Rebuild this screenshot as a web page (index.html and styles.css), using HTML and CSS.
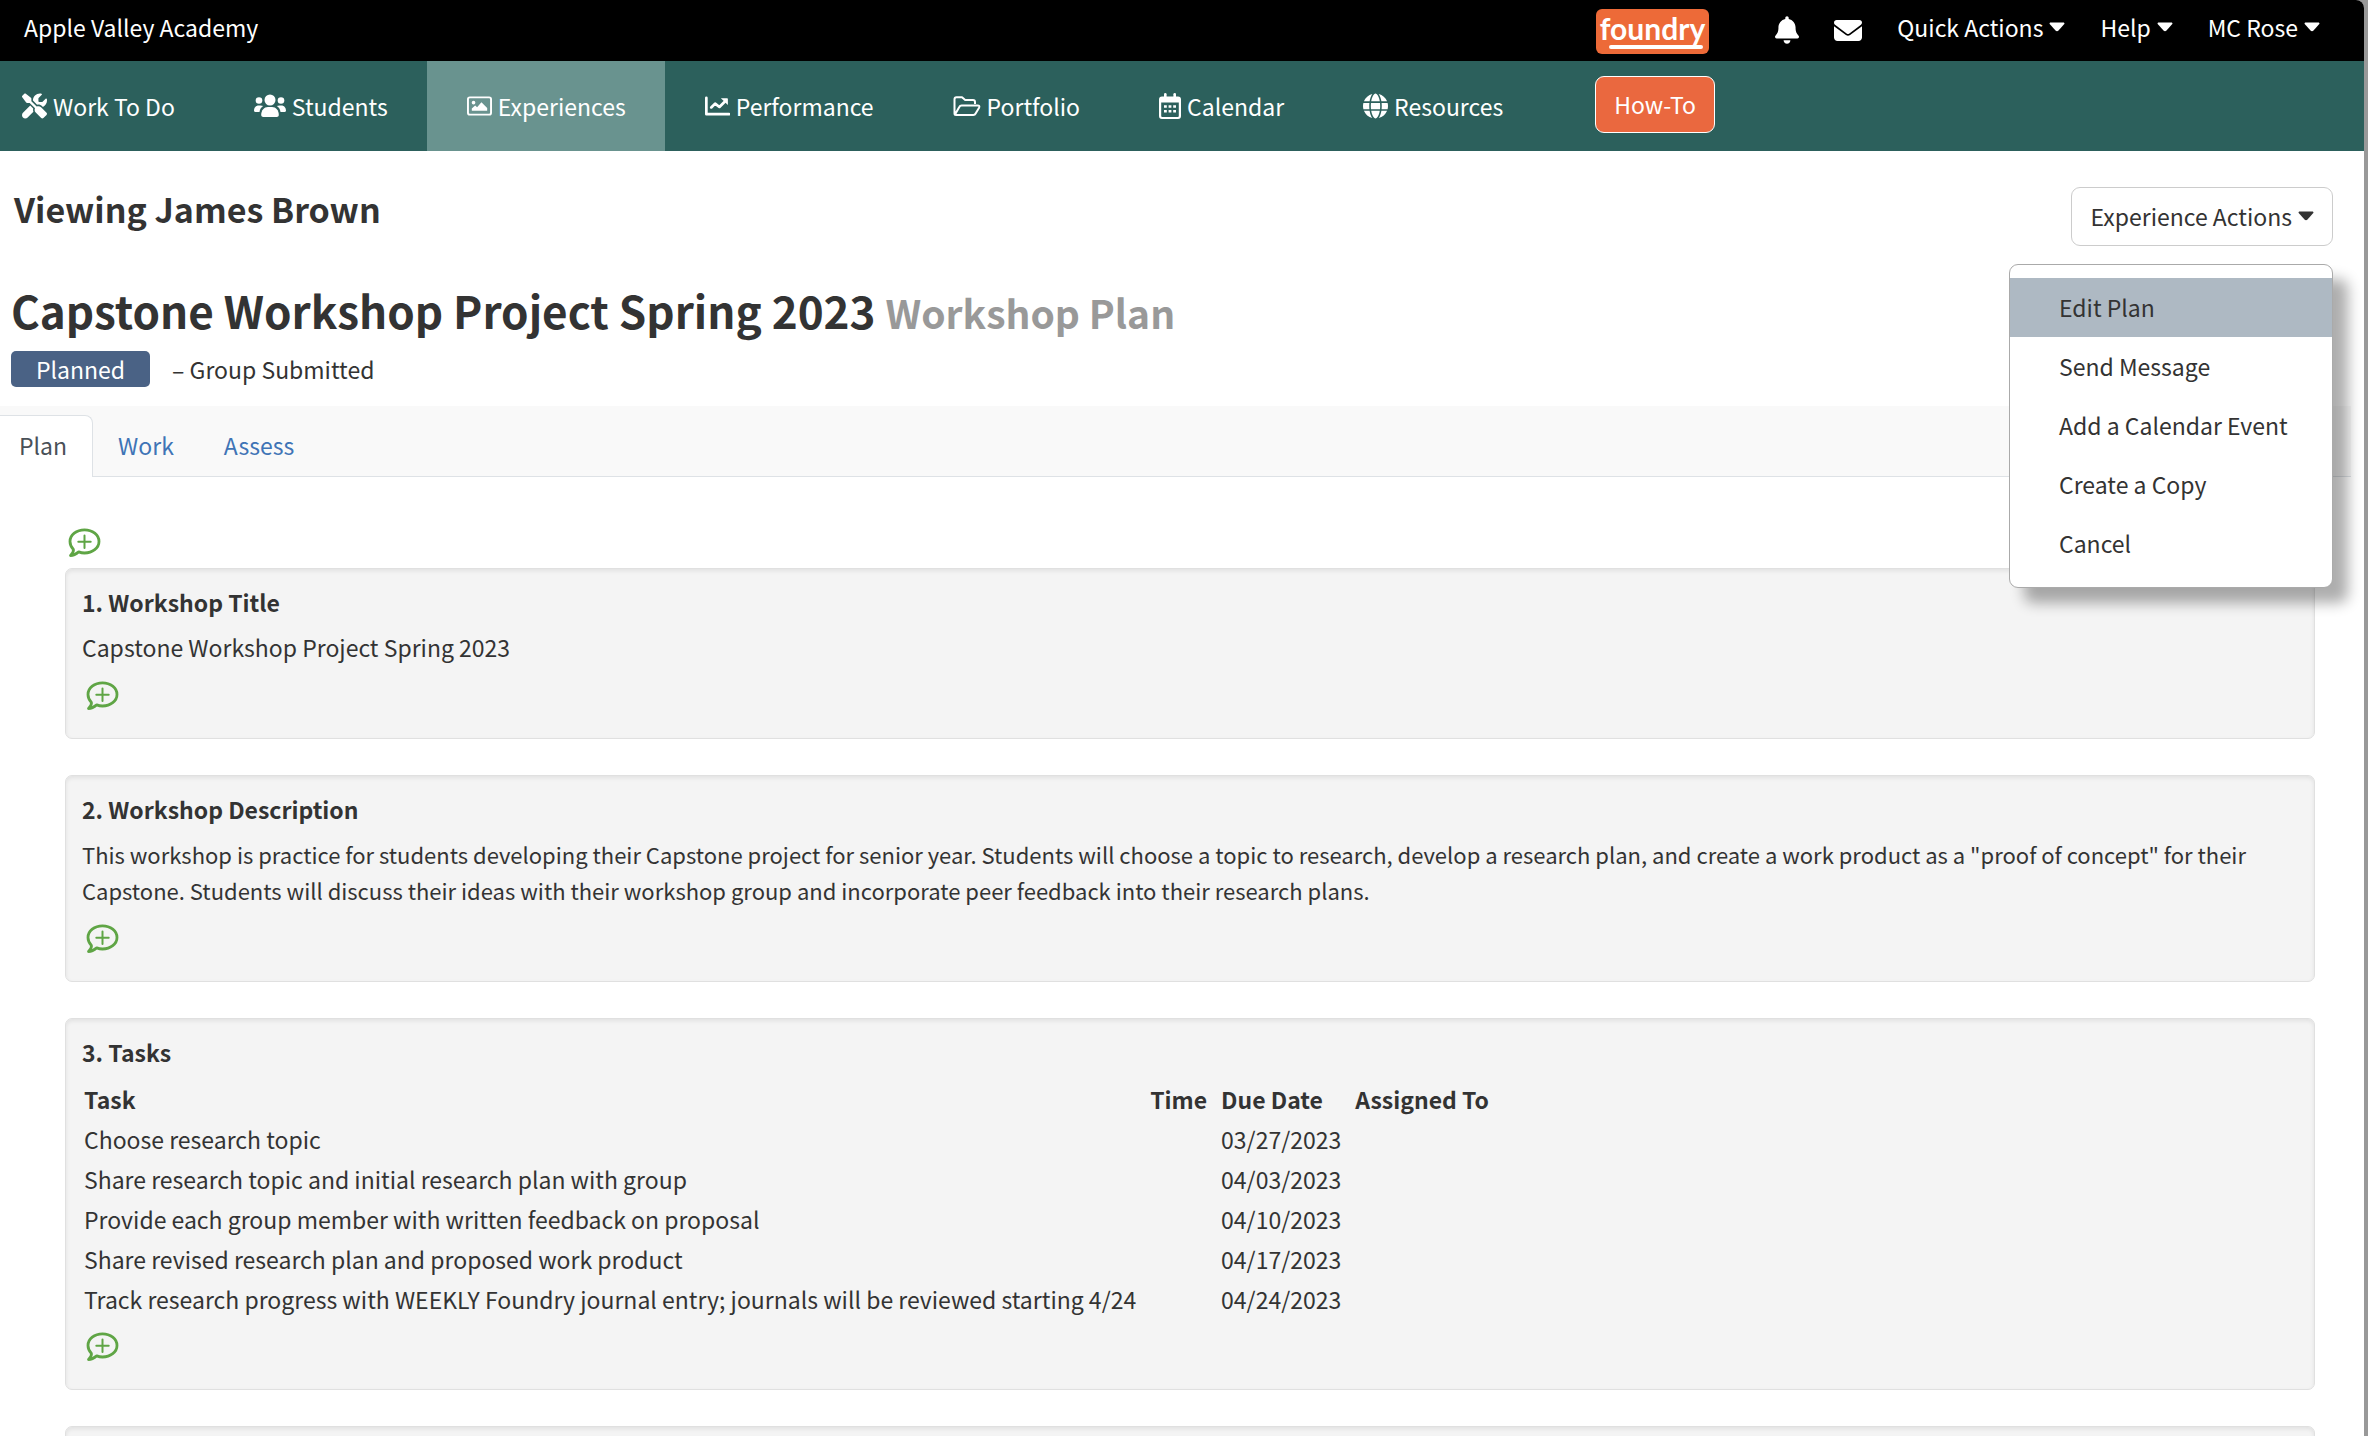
FILE: index.html
```html
<!DOCTYPE html>
<html lang="en">
<head>
<meta charset="utf-8">
<title>Foundry – Capstone Workshop Project Spring 2023</title>
<link rel="stylesheet" href="styles.css">
</head>
<body>
<svg class="sprite" aria-hidden="true">
  <symbol id="caret" viewBox="0 0 16 16"><path d="M1.200 3.500h13.600q1.200.6.5 1.600l-5.800 6.300q-1.500 1.500-3 0L.7 5.100Q0 4.100 1.200 3.500z"/></symbol>
  <symbol id="comment-plus" viewBox="0 0 32 30"><path d="M2 27.500c1.800-2 3.400-3.600 2.900-6C3 19.500 1.500 16.500 1.500 13.500 1.500 7 8 1.800 16 1.800s14.500 5.200 14.500 11.700S24 25 16 25c-2.100 0-4-.4-5.800-1.100-2 1.700-4.700 3.600-8.200 3.600z" fill="none" stroke="currentColor" stroke-width="2.800" stroke-linejoin="round"/><path d="M16 7.500v12.500M9.800 13.700h12.400" fill="none" stroke="currentColor" stroke-width="2" stroke-linecap="round"/></symbol>
</svg>
<div class="page">
  <header class="topbar">
    <span class="school">Apple Valley Academy</span>
    <a class="logo" href="#">foundry</a>
    <nav class="account" aria-label="Account">
      <button class="icon-btn bell" aria-label="Notifications"><svg viewBox="0 0 448 512"><path d="M224 0c-17.700 0-32 14.300-32 32v19.200C119 66 64 130.600 64 208v18.800c0 47-17.300 92.400-48.500 127.600l-7.400 8.300c-8.400 9.400-10.400 22.900-5.300 34.400S19.400 416 32 416h384c12.600 0 24-7.400 29.200-18.900s3.100-25-5.300-34.400l-7.400-8.300C401.300 319.200 384 273.900 384 226.800V208c0-77.400-55-142-128-156.800V32c0-17.700-14.300-32-32-32zm45.300 493.300c12-12 18.700-28.300 18.700-45.300H160c0 17 6.700 33.300 18.700 45.300S207 512 224 512s33.300-6.700 45.300-18.700z"/></svg></button>
      <button class="icon-btn mail" aria-label="Messages"><svg viewBox="0 64 512 384"><path d="M48 64C21.500 64 0 85.500 0 112c0 15.100 7.100 29.300 19.200 38.400l217.600 163.200c11.400 8.500 27 8.500 38.400 0l217.600-163.200c12.100-9.100 19.200-23.300 19.200-38.400 0-26.500-21.500-48-48-48H48zM0 176v208c0 35.300 28.700 64 64 64h384c35.300 0 64-28.700 64-64V176L294.400 339.200a63.900 63.900 0 0 1-76.800 0L0 176z"/></svg></button>
      <button class="drop">Quick Actions<svg class="caret"><use href="#caret"/></svg></button>
      <button class="drop">Help<svg class="caret"><use href="#caret"/></svg></button>
      <button class="drop">MC Rose<svg class="caret"><use href="#caret"/></svg></button>
    </nav>
  </header>

  <nav class="mainnav" aria-label="Main">
    <a href="#" class="first"><svg class="w25" viewBox="0 0 512 512"><path d="M78.600 5c-9.500-7.400-23-6.500-31.600 2L7 47c-8.500 8.500-9.400 22-2.100 31.600l80 104c4.500 5.900 11.600 9.400 19 9.400h54.100l109 109c-14.700 29-10 65.400 14.300 89.600l112 112c12.500 12.500 32.800 12.500 45.300 0l64-64c12.500-12.500 12.500-32.800 0-45.300l-112-112c-24.200-24.200-60.600-29-89.600-14.300l-109-109V104c0-7.500-3.500-14.500-9.400-19L78.600 5zM19.900 396.100C7.200 408.800 0 426.100 0 444.100 0 481.600 30.400 512 67.900 512c18 0 35.300-7.200 48-19.900l117.800-117.800c-7.800-20.900-9-43.600-3.600-65.100l-61.700-61.700L19.900 396.100zM512 144c0-10.500-1.100-20.700-3.200-30.500-2.400-11.200-16.100-14.100-24.200-6l-63.900 63.900c-3 3-7.100 4.700-11.300 4.700H352c-8.800 0-16-7.200-16-16v-57.400c0-4.200 1.700-8.300 4.700-11.300l63.900-63.900c8.100-8.100 5.200-21.800-6-24.200C388.700 1.100 378.500 0 368 0c-79.500 0-144 64.500-144 144v.8l85.300 85.300c36-9.100 75.800.5 104 28.700l15.700 15.700C478 251 512 201.500 512 144z"/></svg>Work To Do</a>
    <a href="#"><svg class="w32" viewBox="0 0 32 26"><circle cx="16" cy="7" r="5.500"/><path d="M7.200 22c0-5 3-8 6.800-8h4c3.800 0 6.800 3 6.800 8 0 1.300-1 2-2 2H9.200c-1 0-2-.7-2-2z"/><circle cx="5" cy="7.500" r="3.300"/><circle cx="27" cy="7.500" r="3.300"/><path d="M1.300 19C.5 19 0 18.500 0 17.800 0 14.600 2 12.500 4.500 12.500h2c1 0 1.900.2 2.600.6C7 14.700 5.800 16.500 5.500 19zM30.700 19c.8 0 1.300-.5 1.300-1.200 0-3.200-2-5.300-4.500-5.300h-2c-1 0-1.900.2-2.600.6 2.100 1.600 3.300 3.400 3.600 5.900z"/></svg>Students</a>
    <a href="#" class="active" aria-current="page"><svg class="w25" viewBox="0 0 26 26"><rect x="1" y="4" width="24" height="18" rx="2" fill="none" stroke="currentColor" stroke-width="2"/><circle cx="6.800" cy="9.500" r="1.900"/><path d="M5 18v-2.500l3.500-3 2 1.800L15 9l6 6v3z"/></svg>Experiences</a>
    <a href="#"><svg class="w25" viewBox="0 0 26 26"><path d="M1.400 4.500V21.500H25" fill="none" stroke="currentColor" stroke-width="2.800" stroke-linecap="round" stroke-linejoin="round"/><path d="M6.500 14.500l4-4 4.500 3.500 6-6" fill="none" stroke="currentColor" stroke-width="2.800" stroke-linecap="round" stroke-linejoin="round"/><path d="M16.500 5H23q.8 0 .8.800V12z"/></svg>Performance</a>
    <a href="#"><svg class="w28" viewBox="0 0 28 26"><path d="M1.500 20.500V6.200q0-2 2-2H9l3.200 2.800H20q2 0 2 2V11M2 21.500l4.300-7.500q.7-1.500 2.300-1.500h16q2.500 0 1.500 2.200l-3.500 5.800q-.7 1.500-2.300 1.500H3q-1.500 0-1.500-1.500" fill="none" stroke="currentColor" stroke-width="2" stroke-linejoin="round"/></svg>Portfolio</a>
    <a href="#"><svg class="w22" viewBox="0 0 22 26"><path d="M3 3.500h16q3 0 3 3V23q0 3-3 3H3q-3 0-3-3V6.500q0-3 3-3zM2.200 9.500V23q0 1 1 1h15.600q1 0 1-1V9.500z" fill-rule="evenodd"/><rect x="5" y="0" width="2.600" height="6" rx="1.300"/><rect x="14.400" y="0" width="2.600" height="6" rx="1.300"/><path d="M5 12.200h2.800v2.600H5zM9.600 12.200h2.800v2.600H9.600zM14.200 12.200H17v2.600h-2.800zM5 17h2.800v2.600H5zM9.600 17h2.800v2.600H9.600zM14.200 17H17v2.600h-2.800z"/></svg>Calendar</a>
    <a href="#"><svg class="w25" viewBox="0 0 512 512"><path d="M352 256c0 22.200-1.200 43.600-3.300 64H163.300c-2.200-20.400-3.300-41.800-3.300-64s1.200-43.600 3.300-64h185.400c2.200 20.400 3.300 41.800 3.300 64zm28.800-64h123.100c5.300 20.500 8.100 41.900 8.100 64s-2.800 43.500-8.100 64H380.800c2.100-20.600 3.200-42 3.200-64s-1.100-43.400-3.200-64zm112.600-32H376.700c-10-63.900-29.800-117.400-55.300-151.600 78.300 20.700 142 77.500 171.900 151.600zm-149.100 0H167.700c6.100-36.400 15.500-68.600 27-94.700 10.500-23.600 22.200-40.700 33.500-51.500C239.400 3.200 248.700 0 256 0s16.600 3.200 27.800 13.800c11.300 10.800 23 27.900 33.500 51.500 11.600 26 20.900 58.200 27 94.700zm-209 0H18.600C48.600 85.900 112.200 29.100 190.600 8.400 165.100 42.600 145.300 96.100 135.300 160zM8.100 192h123.100c-2.100 20.600-3.200 42-3.200 64s1.100 43.400 3.200 64H8.100C2.800 299.500 0 278.100 0 256s2.800-43.500 8.100-64zm186.600 254.600c-11.600-26-20.900-58.200-27-94.600h176.600c-6.100 36.400-15.500 68.600-27 94.600-10.500 23.600-22.200 40.700-33.500 51.500C272.600 508.800 263.300 512 256 512s-16.600-3.200-27.800-13.800c-11.300-10.800-23-27.900-33.500-51.600zM135.300 352c10 63.900 29.800 117.400 55.300 151.600C112.200 482.900 48.600 426.100 18.600 352h116.700zm358.100 0c-30 74.100-93.600 130.900-171.900 151.600 25.500-34.200 45.200-87.700 55.300-151.600h116.600z"/></svg>Resources</a>
    <button class="howto">How-To</button>
  </nav>

  <section class="viewing">
    <h2>Viewing James Brown</h2>
    <div class="actions">
      <button class="actions-btn" aria-haspopup="true" aria-expanded="true">Experience Actions<svg class="caret"><use href="#caret"/></svg></button>
      <ul class="menu">
        <li><a href="#" class="current">Edit Plan</a></li>
        <li><a href="#">Send Message</a></li>
        <li><a href="#">Add a Calendar Event</a></li>
        <li><a href="#">Create a Copy</a></li>
        <li><a href="#">Cancel</a></li>
      </ul>
    </div>
  </section>

  <section class="title">
    <h1>Capstone Workshop Project Spring 2023 <small>Workshop Plan</small></h1>
    <p class="status"><span class="badge">Planned</span><span>– Group Submitted</span></p>
  </section>

  <nav class="tabs" aria-label="Experience sections">
    <a href="#" class="on" aria-current="page">Plan</a>
    <a href="#">Work</a>
    <a href="#">Assess</a>
  </nav>

  <main class="plan">
    <button class="comment" aria-label="Add comment"><svg><use href="#comment-plus"/></svg></button>
    <section class="card">
      <h3>1. Workshop Title</h3>
      <p>Capstone Workshop Project Spring 2023</p>
      <button class="comment" aria-label="Add comment"><svg><use href="#comment-plus"/></svg></button>
    </section>
    <section class="card">
      <h3>2. Workshop Description</h3>
      <p class="long">This workshop is practice for students developing their Capstone project for senior year. Students will choose a topic to research, develop a research plan, and create a work product as a "proof of concept" for their Capstone. Students will discuss their ideas with their workshop group and incorporate peer feedback into their research plans.</p>
      <button class="comment" aria-label="Add comment"><svg><use href="#comment-plus"/></svg></button>
    </section>
    <section class="card">
      <h3>3. Tasks</h3>
      <table>
        <thead><tr><th>Task</th><th>Time</th><th>Due Date</th><th>Assigned To</th></tr></thead>
        <tbody>
          <tr><td>Choose research topic</td><td></td><td>03/27/2023</td><td></td></tr>
          <tr><td>Share research topic and initial research plan with group</td><td></td><td>04/03/2023</td><td></td></tr>
          <tr><td>Provide each group member with written feedback on proposal</td><td></td><td>04/10/2023</td><td></td></tr>
          <tr><td>Share revised research plan and proposed work product</td><td></td><td>04/17/2023</td><td></td></tr>
          <tr><td>Track research progress with WEEKLY Foundry journal entry; journals will be reviewed starting 4/24</td><td></td><td>04/24/2023</td><td></td></tr>
        </tbody>
      </table>
      <button class="comment" aria-label="Add comment"><svg><use href="#comment-plus"/></svg></button>
    </section>
    <section class="card"></section>
  </main>
</div>
</body>
</html>
```
FILE: styles.css
```css
* { box-sizing: border-box; }

html { background: #999; }

body {
  margin: 0;
  height: 100vh;
  overflow: hidden;
  padding-right: 4px;
  font: 23px/36px "Noto Sans CJK SC", "Noto Sans", sans-serif;
  color: #333;
}

h1, h2, h3, p, ul { margin: 0; padding: 0; }
a { color: inherit; text-decoration: none; }
button { font: inherit; color: inherit; background: none; border: 0; padding: 0; margin: 0; cursor: pointer; }
svg { fill: currentColor; display: block; flex: none; }

.sprite { position: absolute; width: 0; height: 0; }
.page { height: 100vh; background: #fff; border-top-right-radius: 8px; overflow: hidden; }

.caret { width: 16px; height: 16px; }

/* Top bar */
.topbar {
  display: grid;
  grid-template-columns: 1596px auto 1fr;
  align-items: center;
  height: 61px;
  padding-bottom: 8px;
  background: #000;
  color: #fff;
}
.school { padding-left: 24px; }
.logo {
  position: relative;
  width: 113px;
  height: 45px;
  margin-top: 9px;
  border-radius: 6px;
  background: #ed6a38;
  font: bold 30px/38px Lato, sans-serif;
  text-align: center;
}
.logo::after {
  content: "";
  position: absolute;
  left: 13px;
  right: 6px;
  bottom: 5px;
  height: 4px;
  border-radius: 2px;
  background: #fff;
}
.account { display: flex; align-items: center; justify-content: flex-end; gap: 35px; padding-right: 44px; }
.drop, .actions-btn { display: flex; align-items: center; gap: 6px; }
.icon-btn { padding-top: 6px; }
.bell svg { width: 24px; height: 28px; }
.mail svg { width: 28px; height: 21px; }

/* Main navigation */
.mainnav { display: flex; height: 90px; background: #2c605c; color: #fff; }
.mainnav a { display: flex; align-items: center; gap: 6px; padding: 0 39px 0 40px; }
.mainnav .first { padding-left: 22px; }
.mainnav .active { background: #69938f; }
.mainnav svg { height: 26px; }
.w22 { width: 22px; }
.w25 { width: 25px; }
.w28 { width: 28px; }
.w32 { width: 32px; }
.howto {
  align-self: center;
  height: 57px;
  margin: 0 0 3px 53px;
  padding: 0 18px 2px;
  border: 1px solid #fff;
  border-radius: 9px;
  background: #ea683f;
}

/* Viewing row */
.viewing { display: flex; justify-content: space-between; padding: 36px 31px 0 14px; height: 127px; }
.viewing h2 { font-size: 34px; line-height: 44px; }
.actions { position: relative; }
.actions-btn { height: 59px; padding: 0 18px 2px; border: 1px solid #ccc; border-radius: 9px; }
.menu {
  position: absolute;
  top: 77px;
  right: 0;
  z-index: 2;
  width: 324px;
  padding: 13px 0 14px;
  list-style: none;
  white-space: nowrap;
  background: #fff;
  border: 1px solid #aaa;
  border-radius: 9px;
  box-shadow: 15px 15px 14px rgba(0, 0, 0, .32);
}
.menu a { display: block; padding: 11px 20px 12px 49px; }
.menu .current { background: #aeb9c3; }

/* Title */
.title { padding: 0 11px; height: 128px; }
.title h1 { font-size: 44px; line-height: 65px; margin-bottom: 6px; }
.title small { font-size: 39px; color: #999; }
.status { display: flex; align-items: center; gap: 22px; }
.badge { padding: 0 25px; border-radius: 5px; background: #4a6285; color: #fff; }

/* Tabs */
.tabs { display: flex; height: 71px; margin-right: 13px; padding-top: 9px; background: #f9f9f9; border-bottom: 1px solid #dee2e6; }
.tabs a { height: 62px; padding: 12px 25px; color: #3f74b6; }
.tabs .on { padding-top: 11px; padding-left: 19px; background: #fff; border: 1px solid #dee2e6; border-width: 1px 1px 0 0; border-top-right-radius: 8px; color: #495057; }

/* Plan */
.plan { padding: 51px 49px 0 65px; }
.comment { display: block; padding: 0 4px; color: #5fa545; }
.comment svg { width: 33px; height: 30px; }
.card {
  min-height: 80px;
  margin-bottom: 36px;
  padding: 15px 16px 17px;
  border: 1px solid #e0e0e0;
  border-radius: 7px;
  background: #f4f4f4;
  box-shadow: inset 0 2px 4px rgba(0, 0, 0, .08);
}
.plan > .comment { margin-bottom: 10px; padding: 0 3px; }
.card h3 { font-size: 23px; line-height: 36px; margin-bottom: 9px; }
.card p { margin-bottom: 16px; }
.card .long { font-size: 22px; }
.card .comment { margin-bottom: 10px; }

table { border-collapse: collapse; margin-bottom: 13px; }
th, td { padding: 2px 12px 2px 2px; text-align: left; height: 40px; }
```
